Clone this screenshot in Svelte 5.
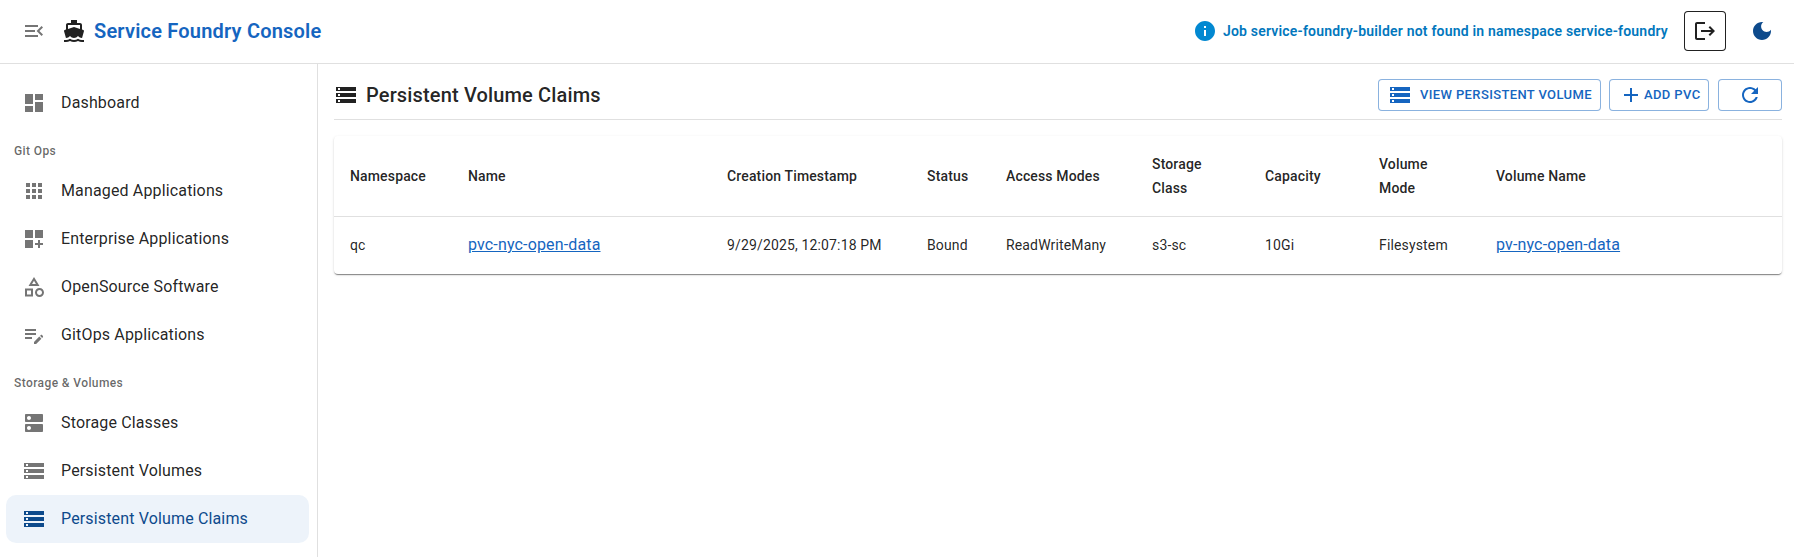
<script>
  const I = {
    menu: "M3 18h13v-2H3zm0-5h10v-2H3zm0-7v2h13V6zm18 9.59L17.42 12 21 8.41 19.59 7l-5 5 5 5z",
    boat: "M20 21c-1.39 0-2.78-.47-4-1.32-2.44 1.71-5.56 1.71-8 0C6.78 20.53 5.39 21 4 21H2v2h2c1.38 0 2.74-.35 4-.99 2.52 1.29 5.48 1.29 8 0 1.26.65 2.62.99 4 .99h2v-2zM3.95 19H4c1.6 0 3.02-.88 4-2 .98 1.12 2.4 2 4 2s3.02-.88 4-2c.98 1.12 2.4 2 4 2h.05l1.89-6.68c.08-.26.06-.54-.06-.78s-.34-.42-.6-.5L20 10.62V6c0-1.1-.9-2-2-2h-3V1H9v3H6c-1.1 0-2 .9-2 2v4.62l-1.29.42c-.26.08-.48.26-.6.5s-.15.52-.06.78zM6 6h12v3.97L12 8 6 9.97z",
    dashboard: "M3 13h8V3H3zm0 8h8v-6H3zm10 0h8V11h-8zm0-18v6h8V3z",
    apps: "M4 8h4V4H4zm6 12h4v-4h-4zm-6 0h4v-4H4zm0-6h4v-4H4zm6 0h4v-4h-4zm6-10v4h4V4zm-6 4h4V4h-4zm6 6h4v-4h-4zm0 6h4v-4h-4z",
    custom: "M3 3h8v8H3zm10 0h8v8h-8zM3 13h8v8H3zm15 0h-2v3h-3v2h3v3h2v-3h3v-2h-3z",
    category: "M12 2l-5.5 9h11zm0 3.84L13.93 9h-3.87zM17.5 13c-2.49 0-4.5 2.01-4.5 4.5s2.01 4.5 4.5 4.5 4.5-2.01 4.5-4.5-2.01-4.5-4.5-4.5zm0 7c-1.38 0-2.5-1.12-2.5-2.5s1.12-2.5 2.5-2.5 2.5 1.12 2.5 2.5-1.12 2.5-2.5 2.5zM3 21.5h8v-8H3zm2-6h4v4H5z",
    edit: "M3 10h11v2H3zm0-2h11V6H3zm0 8h7v-2H3zm15.01-3.13.71-.71c.39-.39 1.02-.39 1.41 0l.71.71c.39.39.39 1.02 0 1.41l-.71.71zm-.71.71-5.3 5.3V21h2.12l5.3-5.3z",
    dns: "M20 13H4c-.55 0-1 .45-1 1v6c0 .55.45 1 1 1h16c.55 0 1-.45 1-1v-6c0-.55-.45-1-1-1M7 19c-1.1 0-2-.9-2-2s.9-2 2-2 2 .9 2 2-.9 2-2 2M20 3H4c-.55 0-1 .45-1 1v6c0 .55.45 1 1 1h16c.55 0 1-.45 1-1V4c0-.55-.45-1-1-1M7 9c-1.1 0-2-.9-2-2s.9-2 2-2 2 .9 2 2-.9 2-2 2",
    storage: "M2 20h20v-4H2zm2-3h2v2H4zM2 4v4h20V4zm4 3H4V5h2zm-4 7h20v-4H2zm2-3h2v2H4z",
    info: "M12 2C6.48 2 2 6.48 2 12s4.48 10 10 10 10-4.48 10-10S17.52 2 12 2m1 15h-2v-6h2zm0-8h-2V7h2z",
    logout: "M17 7l-1.41 1.41L18.17 11H8v2h10.17l-2.58 2.58L17 17l5-5zM4 5h8V3H4c-1.1 0-2 .9-2 2v14c0 1.1.9 2 2 2h8v-2H4z",
    moon: "M12 3c-4.97 0-9 4.03-9 9s4.03 9 9 9 9-4.03 9-9c0-.46-.04-.92-.1-1.36-.98 1.37-2.58 2.26-4.4 2.26-2.98 0-5.4-2.42-5.4-5.4 0-1.81.89-3.42 2.26-4.4-.44-.06-.9-.1-1.36-.1",
    add: "M19 13h-6v6h-2v-6H5v-2h6V5h2v6h6z",
    refresh: "M17.65 6.35C16.2 4.9 14.21 4 12 4c-4.42 0-7.99 3.58-7.99 8s3.57 8 7.99 8c3.73 0 6.84-2.55 7.73-6h-2.08c-.82 2.33-3.04 4-5.65 4-3.31 0-6-2.69-6-6s2.69-6 6-6c1.66 0 3.14.69 4.22 1.78L13 11h7V4z"
  };
  const gitops = [["apps","Managed Applications"],["custom","Enterprise Applications"],["category","OpenSource Software"],["edit","GitOps Applications"]];
  const storage = [["dns","Storage Classes"],["storage","Persistent Volumes"],["storage","Persistent Volume Claims",true]];
  const cols = [
    ["Namespace",118],["Name",259],["Creation Timestamp",200],["Status",79],["Access Modes",146],
    ["Storage Class",113],["Capacity",114],["Volume Mode",117],["Volume Name",302]
  ];
</script>

{#snippet icon(d, cls)}
  <svg class={cls} viewBox="0 0 24 24" aria-hidden="true"><path {d} /></svg>
{/snippet}

{#snippet item(name, label, active)}
  <div class="item" class:active>
    {@render icon(I[name], "i24 navicon")}
    <span class="itemtext">{label}</span>
  </div>
{/snippet}

<div class="app">
  <header class="top">
    <div class="menu">{@render icon(I.menu, "i24 grey")}</div>
    {@render icon(I.boat, "i24 boat")}
    <h1>Service Foundry Console</h1>
    <div class="alert">
      {@render icon(I.info, "i24 infoic")}
      <span>Job service-foundry-builder not found in namespace service-foundry</span>
    </div>
    <button class="logout">{@render icon(I.logout, "i24 dark")}</button>
    <div class="moon">{@render icon(I.moon, "i24 navy")}</div>
  </header>

  <div class="body">
    <nav class="side">
      {@render item("dashboard", "Dashboard", false)}
      <div class="label">Git Ops</div>
      {#each gitops as g}{@render item(g[0], g[1], false)}{/each}
      <div class="label">Storage &amp; Volumes</div>
      {#each storage as g}{@render item(g[0], g[1], g[2])}{/each}
    </nav>

    <main class="main">
      <div class="head">
        {@render icon(I.storage, "i24 dark titleic")}
        <h2>Persistent Volume Claims</h2>
        <div class="actions">
          <button class="btn view">{@render icon(I.storage, "i24 blue")}<span>View Persistent Volume</span></button>
          <button class="btn add">{@render icon(I.add, "i24 blue")}<span>Add PVC</span></button>
          <button class="btn refresh">{@render icon(I.refresh, "i24 blue")}</button>
        </div>
      </div>

      <div class="card">
        <table>
          <colgroup>
            {#each cols as c}<col style="width:{c[1]}px" />{/each}
          </colgroup>
          <thead>
            <tr>{#each cols as c}<th>{c[0]}</th>{/each}</tr>
          </thead>
          <tbody>
            <tr>
              <td>qc</td>
              <td><a href="#pvc">pvc-nyc-open-data</a></td>
              <td>9/29/2025, 12:07:18 PM</td>
              <td>Bound</td>
              <td>ReadWriteMany</td>
              <td>s3-sc</td>
              <td>10Gi</td>
              <td>Filesystem</td>
              <td><a href="#pv">pv-nyc-open-data</a></td>
            </tr>
          </tbody>
        </table>
      </div>
    </main>
  </div>
</div>

<style>
  :global(body) { margin: 0; background: #fff; }
  .app {
    width: 1794px; height: 557px; overflow: hidden;
    font-family: Roboto, "Liberation Sans", sans-serif;
    color: rgba(0,0,0,.87);
    display: flex; flex-direction: column;
  }
  svg { display: block; fill: currentColor; flex: none; }
  .i24 { width: 24px; height: 24px; }
  .grey { color: rgba(0,0,0,.54); }
  .dark { color: rgba(0,0,0,.87); }
  .navy { color: #0d4a8c; }
  .blue { color: #1565c0; }

  .top {
    height: 62px; flex: none; display: flex; align-items: center;
    border-bottom: 1px solid #e0e0e0;
    padding: 0 20px 1px 22px;
  }
  .menu { width: 24px; height: 24px; margin-right: 16px; }
  .boat { color: rgba(0,0,0,.87); margin-right: 8px; }
  h1 {
    margin: 0; font-size: 20px; font-weight: 600; line-height: 1.6;
    letter-spacing: .2px; color: #1565c0;
  }
  .alert {
    margin-left: auto; display: flex; align-items: center; gap: 6px;
    color: #0277bd; font-size: 14px; font-weight: 600; letter-spacing: .2px;
  }
  .infoic { color: #0288d1; }
  .logout {
    width: 42px; height: 40px; margin-left: 16px; padding: 0; display: flex;
    align-items: center; justify-content: center; background: #fff;
    border: 1px solid rgba(0,0,0,.87); border-radius: 4px;
  }
  .moon { margin-left: 24px; }

  .body { flex: 1; display: flex; min-height: 0; }
  .side {
    flex: none; border-right: 1px solid #e0e0e0;
    padding: 15px 8px 0 6px; width: 303px;
  }
  .item {
    height: 48px; display: flex; align-items: center; gap: 15px;
    padding-left: 16px; border-radius: 10px; font-size: 16px;
    letter-spacing: .00938em; white-space: nowrap;
  }
  .itemtext { margin-bottom: 2px; }
  .navicon { color: rgba(0,0,0,.54); }
  .item.active { background: rgba(21,101,192,.08); color: #0d4a8c; }
  .item.active .navicon { color: #0d4a8c; }
  .label {
    font-size: 12px; font-weight: 500; color: rgba(0,0,0,.6);
    letter-spacing: .03333em; margin-left: 8px; height: 35px; line-height: 38px;
    margin-top: 5px;
  }

  .main { flex: 1; min-width: 0; padding: 0 12px 0 16px; }
  .head {
    box-sizing: border-box; height: 56px; padding-top: 6px; display: flex; align-items: center;
    border-bottom: 1px solid #e0e0e0;
  }
  .titleic { margin-right: 8px; }
  h2 { margin: 0; font-size: 20px; font-weight: 500; letter-spacing: .0075em; }
  .actions { margin-left: auto; display: flex; gap: 8px; }
  .btn {
    height: 32px; box-sizing: border-box; display: flex; align-items: center; gap: 8px;
    font: 500 13px/1 Roboto, sans-serif; letter-spacing: .02857em; text-transform: uppercase;
    color: #1565c0; background: #fff; border: 1px solid rgba(21,101,192,.5);
    border-radius: 4px; padding: 0 0 0 9px; white-space: nowrap;
  }
  .view { width: 223px; }
  .add { width: 100px; gap: 1px; }
  .refresh { width: 64px; justify-content: center; padding: 0; margin-left: 1px; }

  .card {
    margin-top: 16px; border-radius: 4px; background: #fff; overflow: hidden;
    box-shadow: 0 2px 1px -1px rgba(0,0,0,.3), 0 1px 1px 0 rgba(0,0,0,.18), 0 1px 3px 0 rgba(0,0,0,.12);
  }
  table { width: 100%; border-collapse: collapse; table-layout: fixed; font-size: 14px; }
  th, td { padding: 16px; text-align: left; letter-spacing: .01071em; line-height: 24px; }
  td { padding-bottom: 17px; }
  th { font-weight: 500; border-bottom: 1px solid #e0e0e0; }
  a { color: #1565c0; font-size: 16px; text-decoration: underline; }
</style>
